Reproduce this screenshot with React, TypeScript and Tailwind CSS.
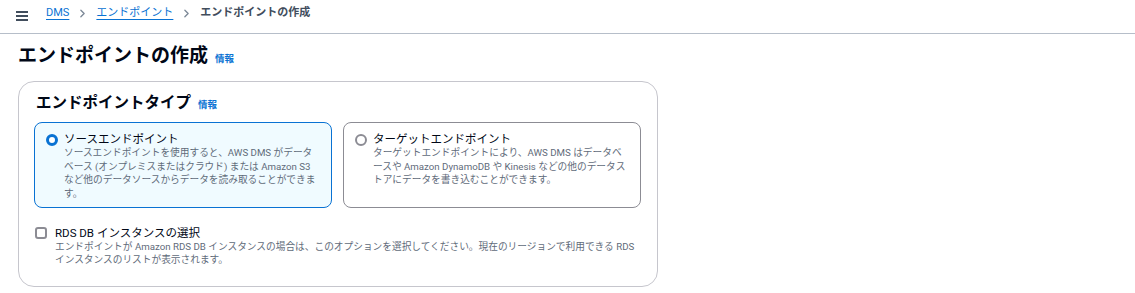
import { ChevronRight } from 'lucide-react'

const FONT = '[font-family:Roboto,"Noto_Sans_CJK_JP",sans-serif]'

function Info() {
  return <span className="text-[9.5px] leading-none font-bold text-[#0972d3] ml-[7px]">情報</span>
}

interface TileProps {
  selected: boolean
  label: string
  lines: string[]
}

function Tile({ selected, label, lines }: TileProps) {
  return (
    <div
      className={`flex-1 basis-0 min-w-0 h-[86px] rounded-lg border px-[11px] pt-[9px] ${
        selected ? 'border-[#0972d3] bg-[#f0fbff]' : 'border-[#8c8c94] bg-white'
      }`}
    >
      <div className="flex gap-[6px]">
        {selected ? (
          <span className="mt-[2px] w-[12px] h-[12px] shrink-0 rounded-full border-[3.5px] border-[#0972d3] bg-white" />
        ) : (
          <span className="mt-[2px] w-[12px] h-[12px] shrink-0 rounded-full border-2 border-[#8c8c94] bg-white" />
        )}
        <div>
          <p className="text-[11.5px] leading-[14px] text-[#000716]">{label}</p>
          {lines.map(l => (
            <p key={l} className="text-[9.7px] leading-[13.7px] text-[#5f6b7a] whitespace-nowrap">{l}</p>
          ))}
        </div>
      </div>
    </div>
  )
}

export default function App() {
  return (
    <div className={`${FONT} bg-white w-[1135px] h-[293px]`}>
      <div className="h-[34px] border-b border-[#b6bec9] flex items-start pl-[16px] pt-[5px]">
        <svg width="12" height="10" viewBox="0 0 12 10" className="mt-[6px]">
          <rect x="0" y="0" width="12" height="2" fill="#414d5c" />
          <rect x="0" y="4" width="12" height="2" fill="#414d5c" />
          <rect x="0" y="8" width="12" height="2" fill="#414d5c" />
        </svg>
        <nav className="flex items-center ml-[18px] mt-[1px] text-[11px] leading-[14px]">
          <span className="text-[#0972d3] underline underline-offset-[3px]">DMS</span>
          <ChevronRight className="mx-[7px] text-[#7d8998]" size={13} strokeWidth={2.5} />
          <span className="text-[#0972d3] underline underline-offset-[3px]">エンドポイント</span>
          <ChevronRight className="mx-[7px] text-[#7d8998]" size={13} strokeWidth={2.5} />
          <span className="text-[#414d5c] font-bold">エンドポイントの作成</span>
        </nav>
      </div>

      <div className="pl-[18px] pt-[10px]">
        <h1 className="flex items-baseline text-[19px] leading-[24px] font-bold text-[#000716]">
          エンドポイントの作成
          <Info />
        </h1>

        <div className="mt-[13px] w-[640px] h-[206px] rounded-[16px] border border-[#c6c6cd] px-[15px] pt-[11px]">
          <h2 className="flex items-baseline text-[15.5px] leading-[20px] font-bold text-[#000716] ml-[2px]">
            エンドポイントタイプ
            <Info />
          </h2>

          <div className="flex gap-[11px] mt-[9px] w-[607px]">
            <Tile
              selected
              label="ソースエンドポイント"
              lines={[
                'ソースエンドポイントを使用すると、AWS DMS がデータ',
                'ベース (オンプレミスまたはクラウド) または Amazon S3',
                'など他のデータソースからデータを読み取ることができま',
                'す。',
              ]}
            />
            <Tile
              selected={false}
              label="ターゲットエンドポイント"
              lines={[
                'ターゲットエンドポイントにより、AWS DMS はデータベ',
                'ースや Amazon DynamoDB や Kinesis などの他のデータス',
                'トアにデータを書き込むことができます。',
              ]}
            />
          </div>

          <div className="flex gap-[8px] mt-[18px] ml-[1px]">
            <span className="mt-[1px] w-[12px] h-[12px] shrink-0 rounded-[3px] border-2 border-[#8c8c94]" />
            <div>
              <p className="text-[11.5px] leading-[14px] text-[#000716]">RDS DB インスタンスの選択</p>
              <p className="text-[9.7px] leading-[13px] text-[#5f6b7a] whitespace-nowrap">
                エンドポイントが Amazon RDS DB インスタンスの場合は、このオプションを選択してください。現在のリージョンで利用できる RDS
              </p>
              <p className="text-[9.7px] leading-[13px] text-[#5f6b7a] whitespace-nowrap">
                インスタンスのリストが表示されます。
              </p>
            </div>
          </div>
        </div>
      </div>
    </div>
  )
}
